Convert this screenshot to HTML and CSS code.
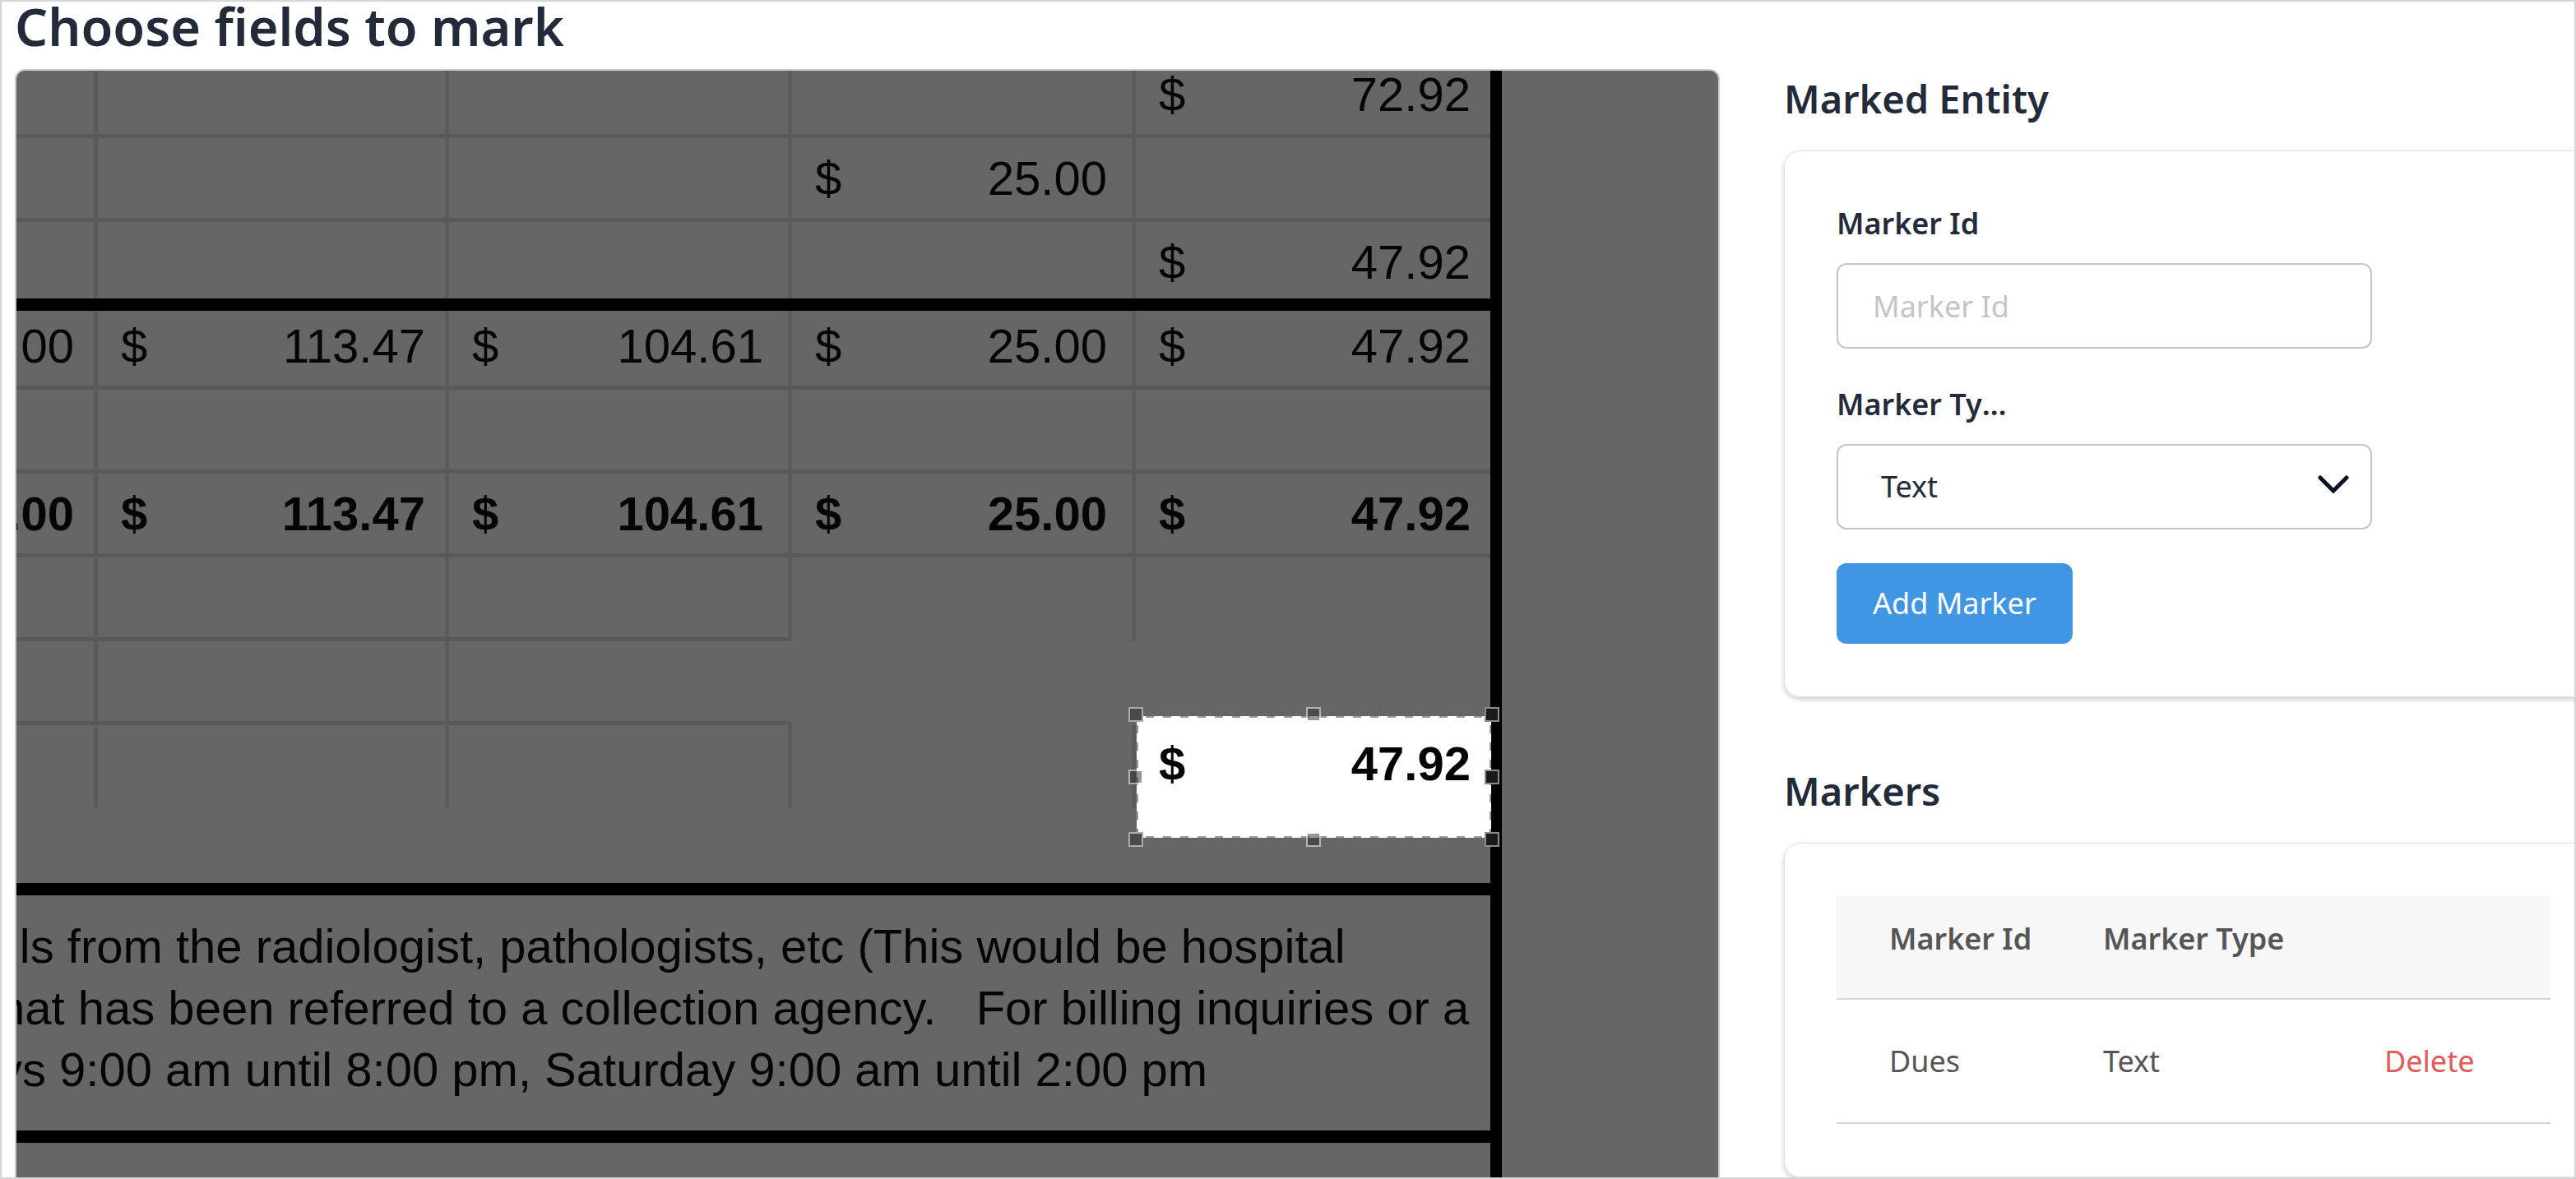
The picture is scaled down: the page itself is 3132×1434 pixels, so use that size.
FILE: index.html
```html
<!DOCTYPE html>
<html lang="en">
<head>
<meta charset="utf-8">
<title>Choose fields to mark</title>
<link rel="stylesheet" href="styles.css">
</head>
<body>
<div class="app">
  <main class="workspace">
    <h1 class="page-title">Choose fields to mark</h1>
    <div class="viewer">
      <div class="document">
        <table class="ledger">
          <colgroup>
            <col class="col-a"><col class="col-b"><col class="col-c"><col class="col-d"><col class="col-e">
          </colgroup>
          <tbody>
            <tr class="row-first"><td></td><td></td><td></td><td></td><td><div class="money"><span>$</span><span>72.92</span></div></td></tr>
            <tr><td></td><td></td><td></td><td><div class="money"><span>$</span><span>25.00</span></div></td><td></td></tr>
            <tr class="row-before-rule"><td></td><td></td><td></td><td></td><td><div class="money"><span>$</span><span>47.92</span></div></td></tr>
            <tr class="row-rule"><td colspan="5"></td></tr>
            <tr class="row-after-rule"><td><div class="money money-cut"><span>.00</span></div></td><td><div class="money"><span>$</span><span>113.47</span></div></td><td><div class="money"><span>$</span><span>104.61</span></div></td><td><div class="money"><span>$</span><span>25.00</span></div></td><td><div class="money"><span>$</span><span>47.92</span></div></td></tr>
            <tr><td></td><td></td><td></td><td></td><td></td></tr>
            <tr class="row-total"><td><div class="money money-cut"><span>.00</span></div></td><td><div class="money"><span>$</span><span>113.47</span></div></td><td><div class="money"><span>$</span><span>104.61</span></div></td><td><div class="money"><span>$</span><span>25.00</span></div></td><td><div class="money"><span>$</span><span>47.92</span></div></td></tr>
            <tr><td></td><td></td><td></td><td class="no-bottom"></td><td class="no-bottom"></td></tr>
            <tr><td></td><td></td><td class="no-right"></td><td class="no-right no-bottom"></td><td class="no-bottom"></td></tr>
            <tr class="row-last"><td></td><td></td><td></td><td></td><td></td></tr>
          </tbody>
        </table>
        <div class="notice">
          <p class="notice-text">ills from the radiologist, pathologists, etc (This would be hospital<br>hat has been referred to a collection agency. &nbsp; For billing inquiries or a<br>ys 9:00 am until 8:00 pm, Saturday 9:00 am until 2:00 pm</p>
        </div>
        <div class="crop">
          <div class="money crop-value"><span>$</span><span>47.92</span></div>
          <i class="handle top left"></i>
          <i class="handle top center"></i>
          <i class="handle top right"></i>
          <i class="handle middle left"></i>
          <i class="handle middle right"></i>
          <i class="handle bottom left"></i>
          <i class="handle bottom center"></i>
          <i class="handle bottom right"></i>
        </div>
      </div>
    </div>
  </main>

  <aside class="sidebar">
    <section class="section">
      <h2 class="section-title">Marked Entity</h2>
      <form class="card">
        <div class="field">
          <label class="label" for="marker-id">Marker Id</label>
          <input class="control" id="marker-id" type="text" placeholder="Marker Id">
        </div>
        <div class="field">
          <label class="label" for="marker-type">Marker Type</label>
          <div class="select-wrap">
            <select class="control select" id="marker-type"><option>Text</option></select>
            <svg class="chevron" viewBox="0 0 38 22" aria-hidden="true"><path d="M3 3 L19 19 L35 3" fill="none" stroke="#0b1226" stroke-width="5" stroke-linecap="round"/></svg>
          </div>
        </div>
        <button class="button" type="button">Add Marker</button>
      </form>
    </section>

    <section class="section">
      <h2 class="section-title">Markers</h2>
      <div class="card">
        <table class="markers">
          <colgroup><col class="col-id"><col class="col-type"><col></colgroup>
          <thead>
            <tr><th scope="col">Marker Id</th><th scope="col">Marker Type</th><th></th></tr>
          </thead>
          <tbody>
            <tr><td>Dues</td><td>Text</td><td><a class="delete" href="#">Delete</a></td></tr>
          </tbody>
        </table>
      </div>
    </section>
  </aside>
</div>
</body>
</html>
```

FILE: styles.css
```css
*,
*::before,
*::after {
  box-sizing: border-box;
}

body {
  margin: 0;
  background: #fff;
  color: #232b3b;
  font-family: "Noto Sans", sans-serif;
  font-size: 36px;
  line-height: 48px;
}

h1,
h2,
p {
  margin: 0;
}

.app {
  display: grid;
  grid-template-columns: minmax(0, 1fr) 961px;
  column-gap: 78px;
  height: 100vh;
  padding-left: 16px;
  border: 2px solid #d5d5d5;
  overflow: hidden;
}

/* Document viewer */

.workspace {
  display: flex;
  flex-direction: column;
  min-height: 0;
}

.page-title {
  margin-bottom: 22px;
  font-size: 63px;
  font-weight: 600;
  line-height: 60px;
}

.viewer {
  flex: 1;
  min-height: 0;
  border: 2px solid #ccc;
  border-bottom: 0;
  border-radius: 12px 12px 0 0;
  background: #666;
  overflow: hidden;
}

.document {
  position: relative;
  width: 1806px;
  height: 100%;
  border-right: 14px solid #000;
  color: #050505;
  font-family: "Liberation Sans", Arial, sans-serif;
  font-size: 58px;
  line-height: 58px;
}

.ledger {
  width: 100%;
  table-layout: fixed;
  border-collapse: separate;
  border-spacing: 0;
}

.col-a { width: 99px; }
.col-b { width: 427px; }
.col-c { width: 417px; }
.col-d { width: 418px; }

.ledger tr {
  height: 102px;
}

.ledger td {
  padding: 0 24px 19px 28px;
  border-right: 5px solid #5a5b5c;
  border-bottom: 5px solid #58595b;
  vertical-align: bottom;
}

.ledger td:nth-child(3),
.ledger td:nth-child(4) {
  padding-right: 30px;
}

.ledger td:last-child {
  border-right: 0;
}

.ledger .row-first {
  height: 82px;
}

.ledger .row-before-rule {
  height: 93px;
}

.ledger .row-before-rule td {
  padding-bottom: 15px;
  border-bottom: 0;
}

.ledger .row-rule {
  height: 15px;
}

.ledger .row-rule td {
  padding: 0;
  border: 0;
  background: #000;
}

.ledger .row-after-rule {
  height: 96px;
}

.ledger .row-last {
  height: 100px;
}

.ledger .no-right {
  border-right: 0;
}

.ledger .no-bottom,
.ledger .row-last td {
  border-bottom: 0;
}

.row-total {
  font-weight: 700;
}

.money {
  display: flex;
  justify-content: space-between;
}

.money-cut {
  justify-content: flex-end;
}

.notice {
  margin-top: 92px;
  padding: 24px 0 37px;
  border-top: 15px solid #000;
  border-bottom: 15px solid #000;
}

.notice-text {
  margin-left: -22px;
  line-height: 75px;
  white-space: nowrap;
}

/* Crop selection over the document */

.crop {
  position: absolute;
  left: 1362px;
  top: 785px;
  width: 431px;
  height: 148px;
  padding: 29px 25px 0 27px;
  background:
    repeating-linear-gradient(90deg, #fff 0 11px, #999 11px 21px) top / 100% 2px no-repeat,
    repeating-linear-gradient(90deg, #fff 0 11px, #999 11px 21px) bottom / 100% 2px no-repeat,
    repeating-linear-gradient(#fff 0 11px, #999 11px 21px) left / 2px 100% no-repeat,
    repeating-linear-gradient(#fff 0 11px, #999 11px 21px) right / 2px 100% no-repeat,
    #fff;
}

.crop-value {
  font-weight: 700;
}

.handle {
  position: absolute;
  width: 18px;
  height: 18px;
  border: 2px solid rgba(255, 255, 255, 0.5);
  background: rgba(47, 47, 47, 0.5);
  background-clip: padding-box;
}

.handle.left { left: -10px; }
.handle.center { left: calc(50% - 10px); }
.handle.right {
  right: -10px;
  border-color: #8c8c8c;
  background-color: #1a1a1a;
}
.handle.top { top: -11px; }
.handle.middle { top: calc(50% - 9px); }
.handle.bottom { bottom: -11px; }

.handle.top.left,
.handle.bottom.left {
  border-color: #ababab;
  background-color: #4a4a4a;
}

/* Sidebar */

.sidebar {
  display: flex;
  flex-direction: column;
  gap: 82px;
  padding-top: 86px;
}

.section-title {
  margin-bottom: 31px;
  font-size: 47px;
  font-weight: 600;
  line-height: 64px;
}

.card {
  width: calc(100% + 36px);
  padding: 64px 64px 64px 63px;
  border: 1px solid #e2e2e2;
  border-radius: 20px;
  box-shadow: 0 3px 6px rgba(0, 0, 0, 0.2);
}

.field {
  display: flex;
  flex-direction: column;
  gap: 24px;
  width: 651px;
}

.field + .field {
  margin-top: 44px;
}

.label {
  width: 220px;
  font-weight: 600;
  overflow: hidden;
  text-overflow: ellipsis;
  white-space: nowrap;
}

.control {
  width: 100%;
  height: 104px;
  padding: 0 42px;
  border: 2px solid #c5c5c8;
  border-radius: 12px;
  background: #fff;
  color: inherit;
  font: inherit;
}

.control::placeholder {
  color: #c4c4c8;
  opacity: 1;
}

.select-wrap {
  position: relative;
}

.select {
  display: block;
  padding-left: 52px;
  appearance: none;
}

.chevron {
  position: absolute;
  top: 38px;
  right: 28px;
  width: 38px;
  height: 22px;
  pointer-events: none;
}

.button {
  display: block;
  height: 98px;
  margin-top: 41px;
  padding: 0 44px;
  border: 0;
  border-radius: 12px;
  background: #4196e4;
  color: #fff;
  font: inherit;
}

.markers {
  width: 100%;
  table-layout: fixed;
  border-collapse: separate;
  border-spacing: 0;
  color: #555;
}

.col-id { width: 260px; }
.col-type { width: 342px; }

.markers th,
.markers td {
  padding: 0 0 0 64px;
  border-bottom: 2px solid #d5d5d5;
  text-align: left;
  white-space: nowrap;
}

.markers th {
  height: 126px;
  padding-bottom: 20px;
  background: #f7f7f7;
  font-weight: 600;
}

.markers td {
  height: 151px;
}

.delete {
  color: #e05a5a;
  text-decoration: none;
}
```
